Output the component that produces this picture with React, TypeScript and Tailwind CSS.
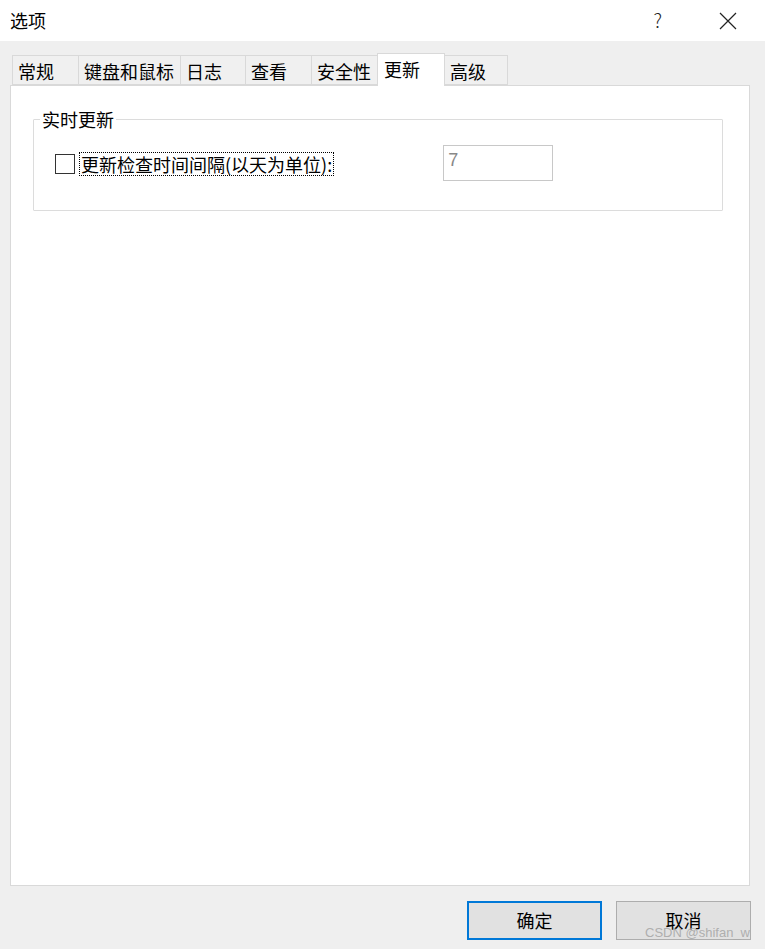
import React from 'react';

const font = { fontFamily: '"Noto Sans CJK SC", "Noto Sans", sans-serif' };

const tabs = [
  { label: '常规', w: 'w-[67px]' },
  { label: '键盘和鼠标', w: 'w-[103px]' },
  { label: '日志', w: 'w-[66px]' },
  { label: '查看', w: 'w-[67px]' },
  { label: '安全性', w: 'w-[67px]' },
  { label: '更新', w: 'w-[68px]', active: true },
  { label: '高级', w: 'w-[64px]' },
];

const Tab = ({ label, w, active }: { label: string; w: string; active?: boolean }) =>
  active ? (
    <div className={`${w} h-[33px] -mb-px -ml-px relative z-10 bg-white border border-b-0 border-[#d9d9d9] pl-[6px] pt-[1px] text-[18px] leading-[28px] text-black`}>
      {label}
    </div>
  ) : (
    <div className={`${w} h-[30px] bg-[#f0f0f0] border border-[#d9d9d9] -ml-px first:ml-0 pl-[5px] text-[18px] leading-[30px] text-black`}>
      {label}
    </div>
  );

export default function App() {
  return (
    <div className="w-[765px] h-[949px] bg-[#efefef] flex flex-col overflow-hidden" style={font}>
      <div className="h-[41px] bg-white flex items-center pl-[10px] shrink-0">
        <span className="text-[18px] text-black">选项</span>
        <span className="ml-auto mr-[57px] text-[19px] text-[#222] font-light">?</span>
        <svg className="mr-[28px]" width="18" height="18" viewBox="0 0 18 18">
          <path d="M1 1 L17 17 M17 1 L1 17" stroke="#222" strokeWidth="1.2" fill="none" />
        </svg>
      </div>

      <div className="flex items-end pl-[12px] pt-[11px] h-[44px] shrink-0">
        {tabs.map((t) => (
          <Tab key={t.label} {...t} />
        ))}
      </div>

      <div className="ml-[10px] w-[740px] h-[801px] bg-white border border-[#d9d9d9] pt-[33px] pl-[22px] shrink-0">
        <div className="relative w-[690px] h-[92px] border border-[#dcdcdc] rounded-[1px]">
          <span className="absolute -top-[13px] left-[6px] bg-white px-[2px] text-[18px] leading-[24px] text-black">
            实时更新
          </span>
          <div className="flex items-center pt-[26px] pl-[21px]">
            <div className="w-[20px] h-[20px] border border-[#333] bg-white" />
            <span className="ml-[4px] border border-dotted border-black px-[1px] text-[18px] leading-[22px] text-black">
              更新检查时间间隔(以天为单位):
            </span>
            <div className="ml-[109px] -mt-[1px] w-[110px] h-[36px] border border-[#c8c8c8] pl-[4px] text-[18px] leading-[28px] text-[#888]" style={{ fontFamily: '"Liberation Sans", sans-serif' }}>
              7
            </div>
          </div>
        </div>
      </div>

      <div className="flex pt-[15px] pl-[467px] gap-[14px] relative">
        <button className="w-[135px] h-[39px] bg-[#e1e1e1] border-2 border-[#0078d7] text-[18px] text-black">确定</button>
        <button className="w-[135px] h-[39px] bg-[#e1e1e1] border border-[#adadad] text-[18px] text-black">取消</button>
        <span className="absolute right-[15px] top-[39px] text-[13px] leading-[15px] text-[#a8a8a8]/90" style={{ fontFamily: '"Liberation Sans", sans-serif' }}>
          CSDN @shifan_w
        </span>
      </div>
    </div>
  );
}
